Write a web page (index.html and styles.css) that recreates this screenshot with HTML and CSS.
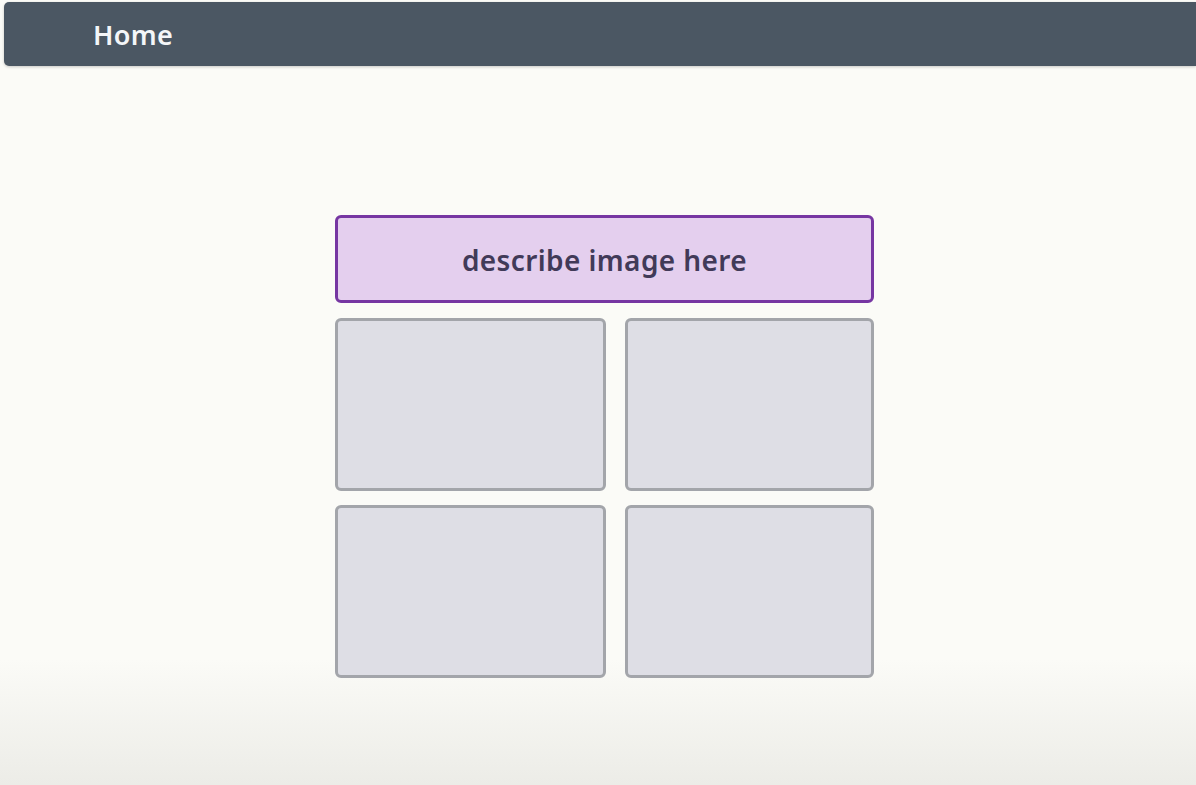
FILE: index.html
```html
<!DOCTYPE html>
<html>
<head>
<meta charset="utf-8">
<link rel="stylesheet" href="styles.css">
</head>
<body>
<div class="page">
  <header class="topbar">
    <span class="title">Home</span>
  </header>
  <main class="content">
    <div class="panel">
      <div class="caption">describe image here</div>
      <div class="grid">
        <div class="tile"></div>
        <div class="tile"></div>
        <div class="tile"></div>
        <div class="tile"></div>
      </div>
    </div>
  </main>
</div>
</body>
</html>
```

FILE: styles.css
```css
html, body {
  margin: 0;
  padding: 0;
  height: 100%;
}
body {
  font-family: "Noto Sans", "DejaVu Sans", sans-serif;
  background: linear-gradient(to bottom, #fbfbf7 0%, #fbfbf7 84%, #ecece7 100%);
  overflow: hidden;
}
.page {
  display: flex;
  flex-direction: column;
  height: 785px;
}
.topbar {
  margin: 2px 0 0 4px;
  height: 64px;
  background: #4b5763;
  border-radius: 5px 0 0 5px;
  display: flex;
  align-items: center;
  padding-left: 89px;
  box-shadow: 0 1px 3px rgba(0,0,0,0.2);
}
.title {
  color: #f4f6f8;
  font-size: 27px;
  font-weight: 600;
  letter-spacing: 0.3px;
}
.content {
  padding: 149px 0 0 335px;
}
.panel {
  width: 539px;
  display: flex;
  flex-direction: column;
  gap: 15px;
}
.caption {
  box-sizing: border-box;
  height: 88px;
  border: 3px solid #7636a2;
  border-radius: 6px;
  background: #e4cfee;
  color: #413a58;
  font-size: 28px;
  font-weight: 600;
  letter-spacing: 0.4px;
  display: flex;
  align-items: center;
  justify-content: center;
  padding-top: 2px;
}
.grid {
  display: grid;
  grid-template-columns: 271px 249px;
  grid-template-rows: 173px 173px;
  column-gap: 19px;
  row-gap: 14px;
}
.tile {
  box-sizing: border-box;
  border: 3px solid #a3a5aa;
  border-radius: 6px;
  background: #dedee5;
}
```
